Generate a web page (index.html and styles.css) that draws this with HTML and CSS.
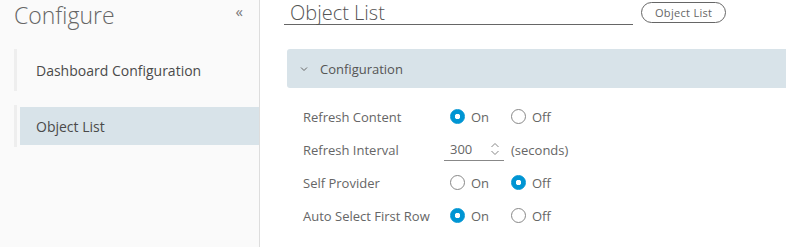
FILE: index.html
```html
<!DOCTYPE html>
<html lang="en">
<head>
    <meta charset="UTF-8">
    <title>Configure</title>
    <link rel="stylesheet" href="styles.css">
</head>
<body>
    <div class="layout">
        <!-- Sidebar -->
        <div class="sidebar">
            <div class="sidebar-head">
                <span class="sidebar-title">Configure</span>
                <span class="collapse">&laquo;</span>
            </div>
            <div class="nav">
                <div class="nav-item">Dashboard Configuration</div>
                <div class="nav-item active">Object List</div>
            </div>
        </div>

        <!-- Main -->
        <div class="main">
            <div class="title-row">
                <div class="title-input">Object List</div>
                <span class="badge">Object List</span>
            </div>

            <div class="panel-head">
                <svg class="chevron" width="8" height="6" viewBox="0 0 8 6"><path d="M1 1.5 L4 4.5 L7 1.5" fill="none" stroke="#666" stroke-width="1"/></svg>
                <span>Configuration</span>
            </div>

            <div class="form">
                <div class="row">
                    <span class="label">Refresh Content</span>
                    <span class="radio checked"></span><span class="opt">On</span>
                    <span class="radio"></span><span class="opt">Off</span>
                </div>
                <div class="row">
                    <span class="label">Refresh Interval</span>
                    <span class="number">
                        <span class="num-val">300</span>
                        <svg class="spin" width="10" height="16" viewBox="0 0 10 16"><path d="M1.5 6 L5 2.5 L8.5 6 M1.5 10 L5 13.5 L8.5 10" fill="none" stroke="#888" stroke-width="1"/></svg>
                    </span>
                    <span class="unit">(seconds)</span>
                </div>
                <div class="row">
                    <span class="label">Self Provider</span>
                    <span class="radio"></span><span class="opt">On</span>
                    <span class="radio checked"></span><span class="opt">Off</span>
                </div>
                <div class="row">
                    <span class="label">Auto Select First Row</span>
                    <span class="radio checked"></span><span class="opt">On</span>
                    <span class="radio"></span><span class="opt">Off</span>
                </div>
            </div>
        </div>
    </div>
</body>
</html>
```

FILE: styles.css
```css
body {
    margin: 0;
    font-family: "Open Sans", "Noto Sans", sans-serif;
    color: #565656;
    background-color: #fff;
    overflow: hidden;
}
.layout {
    display: flex;
    height: 247px;
}
.sidebar {
    width: 259px;
    background-color: #fafafa;
    border-right: 1px solid #ddd;
    flex-shrink: 0;
}
.sidebar-head {
    display: flex;
    justify-content: space-between;
    align-items: flex-start;
    padding: 0 16px 0 14px;
    height: 28px;
}
.sidebar-title {
    font-size: 23px;
    line-height: 31px;
    font-weight: 300;
    color: #666;
}
.collapse {
    font-size: 15px;
    line-height: 22px;
    color: #777;
}
.nav {
    padding: 21px 0 0 14px;
}
.nav-item {
    border-left: 3px solid #eee;
    padding-left: 3px;
    height: 42px;
    margin-bottom: 14px;
    display: flex;
    align-items: center;
    font-size: 14px;
    color: #4a4a4a;
    text-indent: 16px;
}
.nav-item.active {
    background: linear-gradient(#d8e3e9, #d8e3e9) no-repeat 3px 2px / calc(100% - 3px) 38px;
}
.main {
    flex: 1;
    padding-left: 27px;
}
.title-row {
    display: flex;
    align-items: flex-start;
    height: 49px;
}
.title-input {
    width: 343px;
    margin-left: -3px;
    padding-left: 6px;
    height: 24px;
    border-bottom: 1px solid #666;
    font-size: 20px;
    line-height: 26px;
    color: #555;
    font-weight: 300;
}
.badge {
    margin-left: 8px;
    margin-top: 2px;
    border: 1px solid #666;
    border-radius: 11px;
    height: 19px;
    line-height: 19px;
    padding: 0 13px;
    font-size: 11px;
    letter-spacing: 0.3px;
    color: #666;
}
.panel-head {
    background-color: #d8e3e9;
    border-radius: 3px 0 0 3px;
    height: 39px;
    display: flex;
    align-items: center;
    padding-left: 13px;
    font-size: 13px;
    color: #555;
}
.chevron {
    margin-right: 12px;
}
.form {
    padding: 12px 0 0 16px;
}
.row {
    display: flex;
    align-items: center;
    height: 33px;
    font-size: 13px;
    color: #666;
}
.label {
    width: 147px;
}
.radio {
    width: 13px;
    height: 13px;
    border: 1px solid #888;
    border-radius: 50%;
    background: #fff;
    box-sizing: content-box;
}
.radio.checked {
    border-color: #0095d3;
    background: radial-gradient(circle, #fff 2.5px, #0095d3 3px);
}
.opt {
    margin-left: 6px;
    width: 40px;
}
.number {
    display: flex;
    align-items: center;
    width: 60px;
    margin-left: -6px;
    height: 23px;
    border-bottom: 1px solid #888;
    box-sizing: border-box;
    padding-left: 6px;
}
.num-val {
    width: 40px;
}
.unit {
    margin-left: 7px;
}
```
